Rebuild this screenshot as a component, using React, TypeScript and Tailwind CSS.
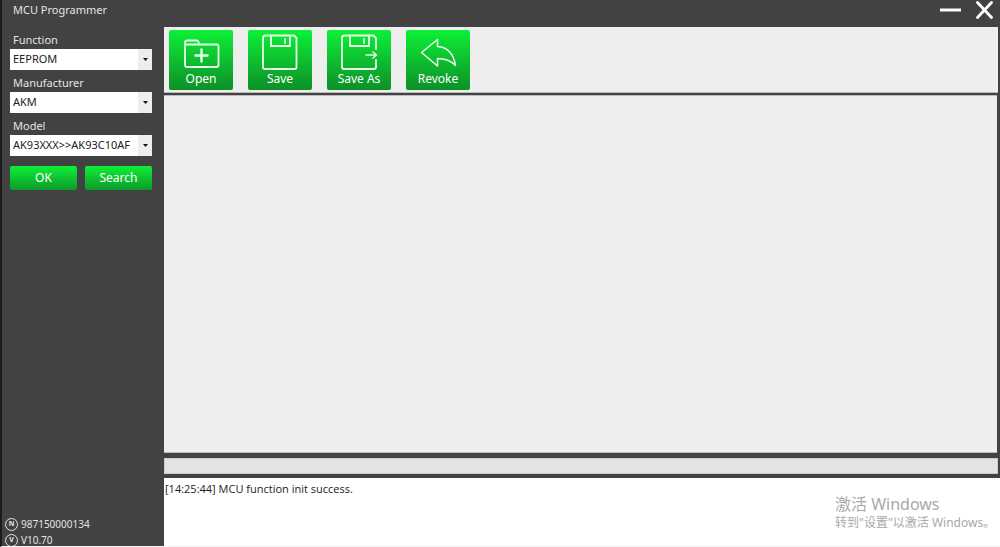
import React, { useState } from 'react';

interface SelectFieldProps {
  id: string;
  label: string;
  options: string[];
}

const SelectField: React.FC<SelectFieldProps> = ({ id, label, options }) => {
  const [value, setValue] = useState(options[0]);

  return (
    <div>
      <label htmlFor={id} className="block h-4 pl-[3px] text-[11px] leading-[14px] text-[#e4e4e4]">
        {label}
      </label>
      <div className="grid h-[21px] grid-cols-[1fr_14px] bg-white">
        <select
          id={id}
          value={value}
          onChange={(e) => setValue(e.target.value)}
          className="col-span-2 col-start-1 row-start-1 h-full w-full min-w-0 appearance-none bg-transparent pl-[3px] text-[11px] text-[#222] outline-none"
        >
          {options.map((option) => (
            <option key={option}>{option}</option>
          ))}
        </select>
        <span className="pointer-events-none col-start-2 row-start-1 flex items-center justify-center bg-[#ededed]">
          <svg width="5" height="3" viewBox="0 0 5 3" fill="#111">
            <path d="M0 0h5L2.5 3z" />
          </svg>
        </span>
      </div>
    </div>
  );
};

interface ToolButtonProps {
  label: string;
  children: React.ReactNode;
}

const ToolButton: React.FC<ToolButtonProps> = ({ label, children }) => (
  <button className="flex h-[60px] w-16 flex-col items-center rounded-[2px] bg-linear-to-b from-[#0cf136] to-[#0c9028] pt-1 text-white">
    <svg
      width="40"
      height="38"
      viewBox="0 0 40 38"
      fill="none"
      stroke="#e8ffe8"
      strokeWidth="1.8"
      strokeLinecap="round"
      strokeLinejoin="round"
    >
      {children}
    </svg>
    <span className="text-[12px] leading-[14px]">{label}</span>
  </button>
);

const InfoRow: React.FC<{ mark: string; text: string }> = ({ mark, text }) => (
  <div className="flex h-4 items-center gap-[3px] text-[10px] text-[#e4e4e4]">
    <span className="flex h-[13px] w-[13px] items-center justify-center rounded-full border border-[#e4e4e4] text-[7px] font-bold">
      {mark}
    </span>
    {text}
  </div>
);

export default function App() {
  return (
    <div className="flex h-screen flex-col border-b border-l-2 border-b-[#f4f4f4] border-l-[#1c1c1c] bg-[#424242] font-['Noto_Sans','Noto_Sans_CJK_SC',sans-serif]">
      <header className="flex h-[27px] shrink-0 justify-between pl-[11px] text-[#e4e4e4]">
        <h1 className="text-[11px] leading-5">MCU Programmer</h1>
        <div className="flex h-5 items-center gap-[15px] pr-[7px]">
          <button aria-label="Minimize">
            <svg width="21" height="18" viewBox="0 0 21 18" stroke="#fff" strokeWidth="3">
              <path d="M0 9h21" />
            </svg>
          </button>
          <button aria-label="Close">
            <svg width="17" height="18" viewBox="0 0 17 18" stroke="#fff" strokeWidth="2.8" strokeLinecap="round">
              <path d="M1.5 1.5l14 15M15.5 1.5l-14 15" />
            </svg>
          </button>
        </div>
      </header>

      <div className="flex min-h-0 flex-1">
        <aside className="flex w-[162px] shrink-0 flex-col overflow-hidden pt-1.5 pr-3 pl-2">
          <div className="flex flex-col gap-1.5">
            <SelectField id="function" label="Function" options={['EEPROM']} />
            <SelectField id="manufacturer" label="Manufacturer" options={['AKM']} />
            <SelectField id="model" label="Model" options={['AK93XXX>>AK93C10AF']} />
          </div>
          <div className="mt-2.5 grid grid-cols-2 gap-2 text-[12px] text-white">
            <button className="h-6 rounded-[2px] bg-linear-to-b from-[#0cf136] to-[#0c9a2a]">OK</button>
            <button className="h-6 rounded-[2px] bg-linear-to-b from-[#0cf136] to-[#0c9a2a]">Search</button>
          </div>
          <div className="mt-auto -mb-0.5 -ml-[5px]">
            <InfoRow mark="N" text="987150000134" />
            <InfoRow mark="V" text="V10.70" />
          </div>
        </aside>

        <main className="flex min-w-0 flex-1 flex-col">
          <div className="mr-0.5 flex h-[66px] shrink-0 gap-[15px] border-b border-[#bbb] bg-[#eee] pt-[3px] pl-[5px]">
            <ToolButton label="Open">
              <path d="M4 31V8.500q0-2 2-2h9.500q1.500 0 2 1.500l1 2.500H36q1.500 0 1.500 1.500v19q0 2-2 2H6q-2 0-2-2z" />
              <path d="M5 10.500h13" />
              <path d="M20.500 15.500v12M14.500 21.500h12" strokeWidth="2.400" />
            </ToolButton>
            <ToolButton label="Save">
              <path d="M5.500 1.500H34l2.500 2.500v29q0 2-2 2H5q-2 0-2-2V4q0-2.500 2.500-2.500z" />
              <path d="M11 1.500v10.500h19V1.500" />
              <path d="M25 5v4" />
            </ToolButton>
            <ToolButton label="Save As">
              <path d="M37 15V4l-2.500-2.500H5.500Q3 1.500 3 4v29q0 2 2 2h30q2 0 2-2v-7" />
              <path d="M11 1.500v10.500h19V1.500" />
              <path d="M25 5v4" />
              <path d="M27 21h10M34 18l3.500 3-3.500 3" strokeWidth="1.400" />
            </ToolButton>
            <ToolButton label="Revoke">
              <path
                d="M3.500 18.500L19.500 5.500v7q15 1 18 19Q31 24.500 19.500 24.500v7.500z"
                strokeWidth="1.500"
              />
            </ToolButton>
          </div>
          <div className="mt-0.5 mr-[3px] flex-1 border-y border-[#bbb] bg-[#eee]" />
          <div
            role="progressbar"
            aria-label="Progress"
            aria-valuenow={0}
            className="mt-[5px] mr-0.5 h-4 shrink-0 border border-[#ccc] bg-[#e3e3e3]"
          />
          <section className="mt-1 flex h-[68px] shrink-0 justify-between bg-white pr-1 pl-px">
            <p className="pt-[3px] font-['Open_Sans',sans-serif] text-[11px] leading-4 text-[#222]">
              [14:25:44] MCU function init success.
            </p>
            <div className="w-[161px] pt-[15px] whitespace-nowrap text-[#a9a9a9]">
              <p className="text-[16px] leading-[22px]">激活 Windows</p>
              <p className="text-[12px] leading-4">转到"设置"以激活 Windows。</p>
            </div>
          </section>
        </main>
      </div>
    </div>
  );
}
